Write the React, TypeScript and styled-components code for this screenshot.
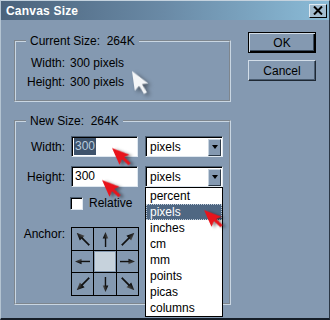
import styled, { createGlobalStyle } from "styled-components";

const Global = createGlobalStyle`
  body {
    margin: 0;
    background: #8499b1;
  }
  * {
    box-sizing: border-box;
  }
`

const Window = styled.div`
  position: relative;
  width: 330px;
  height: 320px;
  overflow: hidden;
  background: #8499b1;
  border-top: 1px solid #c4d2de;
  border-left: 1px solid #b4c4d2;
  border-right: 1px solid #2a3644;
  border-bottom: 2px solid #161e28;
  font-family: "Liberation Sans", Arial, sans-serif;
  font-size: 12px;
  color: #000;
`

const TitleBar = styled.div`
  height: 19px;
  display: flex;
  align-items: center;
  justify-content: space-between;
  padding: 0 2px 0 5px;
  background: linear-gradient(90deg, #4b637c 0%, #6a8aa6 50%, #8bbcd8 100%);
  color: #fff;
  font-weight: bold;
  font-size: 12px;
  letter-spacing: 0.2px;
`

const CloseButton = styled.div`
  width: 18px;
  height: 14px;
  display: flex;
  align-items: center;
  justify-content: center;
  background: #a2bccf;
  border: 1px solid;
  border-color: #dfe9f1 #000 #000 #dfe9f1;
`

const Body = styled.div`
  display: flex;
  gap: 17px;
  padding: 12px 0 0 13px;
`

const LeftCol = styled.div`
  width: 217px;
  margin-top: 2px;
  display: flex;
  flex-direction: column;
  gap: 12px;
`

const Group = styled.fieldset<{ $pt: number; $pb: number }>`
  margin: 0;
  min-width: 0;
  padding: ${(p) => p.$pt}px 0 ${(p) => p.$pb}px;
  border: 2px groove #c9d6e2;
`

const Legend = styled.legend`
  margin-left: 10px;
  padding: 0 4px;
  line-height: 14px;
  white-space: pre;
`

const InfoGrid = styled.div`
  display: grid;
  grid-template-columns: 49px auto;
  column-gap: 5px;
  grid-auto-rows: 19px;
  align-items: center;
`

const FormGrid = styled.div`
  display: grid;
  grid-template-columns: 49px auto;
  column-gap: 5px;
  row-gap: 9px;
  align-items: center;
`

const Label = styled.div<{ $top?: boolean }>`
  text-align: right;
  line-height: 14px;
  align-self: ${(p) => (p.$top ? "start" : "center")};
  margin-top: ${(p) => (p.$top ? 8 : 0)}px;
`

const Controls = styled.div`
  display: flex;
  gap: 7px;
  padding-left: 1px;
`

const Sunken = styled.div<{ $w: number }>`
  width: ${(p) => p.$w}px;
  height: 21px;
  background: #fff;
  border: 1px solid;
  border-color: #4a5c70 #dfe8f0 #dfe8f0 #4a5c70;
  box-shadow: inset 1px 1px 0 #000;
  display: flex;
  align-items: center;
`

const InputText = styled.span<{ $selected?: boolean }>`
  margin-left: 2px;
  padding: 0 1px;
  height: 17px;
  line-height: 17px;
  background: ${(p) => (p.$selected ? "#3e536c" : "transparent")};
  color: ${(p) => (p.$selected ? "#b9cbdc" : "#000")};
`

const SelectWrap = styled.div`
  position: relative;
`

const SelectText = styled.span`
  flex: 1;
  padding-left: 4px;
`

const DropButton = styled.div`
  width: 13px;
  height: 17px;
  margin-right: 1px;
  margin-top: 1px;
  background: #8499b1;
  border: 1px solid;
  border-color: #c8d4e0 #2c3a48 #2c3a48 #c8d4e0;
  display: flex;
  align-items: center;
  justify-content: center;
  &::after {
    content: "";
    border-left: 3px solid transparent;
    border-right: 3px solid transparent;
    border-top: 4px solid #000;
  }
`

const DropList = styled.div`
  position: absolute;
  top: 100%;
  left: 0;
  width: 78px;
  background: #fff;
  border: 1px solid #000;
  z-index: 5;
`

const DropItem = styled.div<{ $active?: boolean }>`
  height: 16px;
  line-height: 16px;
  padding-left: 4px;
  background: ${(p) => (p.$active ? "#4f6782" : "#fff")};
  color: ${(p) => (p.$active ? "#fff" : "#000")};
  outline: ${(p) => (p.$active ? "1px dotted #c3cfdb" : "none")};
  outline-offset: -1px;
`

const CheckRow = styled.div`
  display: flex;
  align-items: center;
  gap: 6px;
`

const CheckBox = styled.div`
  width: 13px;
  height: 13px;
  background: #fff;
  border: 1px solid;
  border-color: #4a5c70 #dfe8f0 #dfe8f0 #4a5c70;
  box-shadow: inset 1px 1px 0 #000;
`

const AnchorGrid = styled.div`
  display: grid;
  grid-template-columns: 21px 22px 21px;
  grid-template-rows: 22px 21px 22px;
  gap: 1px;
  padding: 1px;
  background: #000;
  width: fit-content;
  margin-top: 8px;
  margin-left: 1px;
`

const AnchorCell = styled.div<{ $center?: boolean }>`
  display: flex;
  align-items: center;
  justify-content: center;
  background: ${(p) => (p.$center ? "#c6d2dc" : "#8499b1")};
  box-shadow: ${(p) => (p.$center ? "inset 0 0 0 1px #8499b1" : "none")};
`

const ArrowSvg = styled.svg<{ $angle: number }>`
  transform: rotate(${(p) => p.$angle}deg);
`

const RightCol = styled.div`
  width: 68px;
  display: flex;
  flex-direction: column;
  gap: 7px;
`

const Button = styled.div<{ $default?: boolean }>`
  height: 21px;
  display: flex;
  align-items: center;
  justify-content: center;
  background: #8499b1;
  border: 1px solid;
  border-color: ${(p) =>
    p.$default ? "#000" : "#d2dde8 #1e2833 #1e2833 #d2dde8"};
  box-shadow: ${(p) =>
    p.$default
      ? "inset 1px 1px 0 #d2dde8, inset -1px -1px 0 #000, inset -2px -2px 0 #3a4a5c"
      : "inset -1px -1px 0 #4a5c70"};
`

const Cursor = styled.svg<{ $x: number; $y: number; $r: number }>`
  position: absolute;
  left: ${(p) => p.$x}px;
  top: ${(p) => p.$y}px;
  transform: rotate(${(p) => p.$r}deg);
  transform-origin: 0 0;
  pointer-events: none;
  z-index: 10;
  overflow: visible;
`

const units = ["percent", "pixels", "inches", "cm", "mm", "points", "picas", "columns"]
const anchors = [-45, 0, 45, -90, null, 90, -135, 180, 135]

function Arrow({ angle }: { angle: number }) {
  const diag = angle % 90 !== 0
  const s = diag ? 18 : 15
  return (
    <ArrowSvg $angle={angle} width={s} height={s} viewBox="0 0 16 16">
      <defs>
        <linearGradient id="ag" x1="0" y1="0" x2="1" y2="0">
          <stop offset="0" stopColor="#000" />
          <stop offset="1" stopColor="#555" />
        </linearGradient>
      </defs>
      <polygon points="8,0 5,7 11,7" fill="url(#ag)" />
      <rect x="7.3" y="6" width="1.5" height="10" fill="#111" />
    </ArrowSvg>
  )
}

function Pointer({ x, y, r, color, scale }: { x: number; y: number; r: number; color: string; scale: number }) {
  return (
    <Cursor $x={x} $y={y} $r={r} width={12 * scale} height={20 * scale} viewBox="0 0 12 20">
      <polygon
        points="0,0 0,16 4,12.5 7,19.5 9.5,18.5 6.5,11.5 11.5,11.5"
        fill={color}
        style={{ filter: "drop-shadow(2px 2px 1.5px rgba(0,0,0,0.45))" }}
      />
    </Cursor>
  )
}

function App() {
  return (
    <>
      <Global />
      <Window>
        <TitleBar>
          <span>Canvas Size</span>
          <CloseButton>
            <svg width="10" height="9" viewBox="0 0 10 9">
              <path d="M1 0.5 L9 8.5 M9 0.5 L1 8.5" stroke="#000" strokeWidth="2" />
            </svg>
          </CloseButton>
        </TitleBar>
        <Body>
          <LeftCol>
            <Group $pt={5} $pb={9}>
              <Legend>Current Size:  264K</Legend>
              <InfoGrid>
                <Label>Width:</Label>
                <div>300 pixels</div>
                <Label>Height:</Label>
                <div>300 pixels</div>
              </InfoGrid>
            </Group>
            <Group $pt={8} $pb={7}>
              <Legend>New Size:  264K</Legend>
              <FormGrid>
                <Label>Width:</Label>
                <Controls>
                  <Sunken $w={67}>
                    <InputText $selected>300</InputText>
                  </Sunken>
                  <Sunken $w={78}>
                    <SelectText>pixels</SelectText>
                    <DropButton />
                  </Sunken>
                </Controls>
                <Label>Height:</Label>
                <Controls>
                  <Sunken $w={67}>
                    <InputText>300</InputText>
                  </Sunken>
                  <SelectWrap>
                    <Sunken $w={78}>
                      <SelectText>pixels</SelectText>
                      <DropButton />
                    </Sunken>
                    <DropList>
                      {units.map((u) => (
                        <DropItem key={u} $active={u === "pixels"}>
                          {u}
                        </DropItem>
                      ))}
                    </DropList>
                  </SelectWrap>
                </Controls>
                <div />
                <CheckRow>
                  <CheckBox />
                  <span>Relative</span>
                </CheckRow>
                <Label $top>Anchor:</Label>
                <AnchorGrid>
                  {anchors.map((a, i) =>
                    a === null ? (
                      <AnchorCell key={i} $center />
                    ) : (
                      <AnchorCell key={i}>
                        <Arrow angle={a} />
                      </AnchorCell>
                    )
                  )}
                </AnchorGrid>
              </FormGrid>
            </Group>
          </LeftCol>
          <RightCol>
            <Button $default>OK</Button>
            <Button>Cancel</Button>
          </RightCol>
        </Body>
        <Pointer x={131} y={70} r={-8} color="#f4f6f8" scale={1.25} />
        <Pointer x={111} y={147} r={-24} color="#e8141c" scale={1.15} />
        <Pointer x={101} y={179} r={-24} color="#e8141c" scale={1.15} />
        <Pointer x={203} y={209} r={-24} color="#e8141c" scale={1.15} />
      </Window>
    </>
  )
}

export default App
